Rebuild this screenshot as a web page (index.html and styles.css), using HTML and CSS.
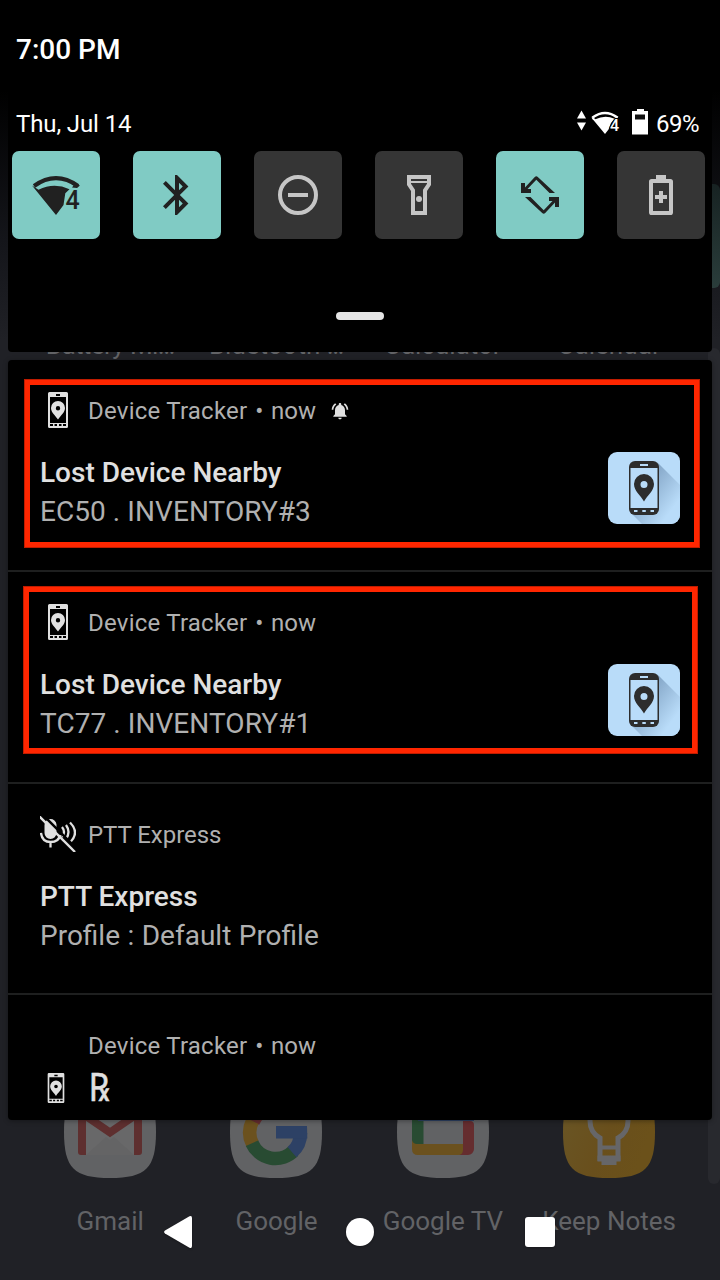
FILE: index.html
```html
<!DOCTYPE html>
<html lang="en">
<head>
<meta charset="utf-8">
<title>Notification shade</title>
<link rel="stylesheet" href="styles.css">
</head>
<body>
<svg class="defs" width="0" height="0" aria-hidden="true">
  <defs>
    <linearGradient id="cast" x1="0.35" y1="0.3" x2="0.85" y2="0.75">
      <stop offset="0" stop-color="#86a8c9"/><stop offset="1" stop-color="#b9dcf9"/>
    </linearGradient>
    <linearGradient id="keep" x1="0" y1="0" x2="1" y2="0.4">
      <stop offset="0" stop-color="#695626"/><stop offset="0.6" stop-color="#694f1c"/><stop offset="1" stop-color="#6b511a"/>
    </linearGradient>
    <symbol id="tracker" viewBox="0 0 36 36">
      <path fill="#e0e0e0" fill-rule="evenodd" d="M9.500 0h17a1.500 1.500 0 0 1 1.500 1.500v33a1.500 1.500 0 0 1-1.500 1.500h-17a1.500 1.500 0 0 1-1.500-1.500v-33A1.500 1.500 0 0 1 9.500 0zM10 5v26h16V5zM16 2v2h4V2zM10 32v2h3v-2zM14.500 32v2h2.500v-2zM19 32v2h2.500v-2zM23 32v2h3v-2z"/>
      <path fill="#e0e0e0" fill-rule="evenodd" d="M18 9a7 7 0 0 0-7 7c0 4.500 4 7 7 11.500 3-4.500 7-7 7-11.500a7 7 0 0 0-7-7zm0 5a2.200 2.200 0 1 1 0 4.400 2.200 2.200 0 0 1 0-4.400z"/>
    </symbol>
    <symbol id="tracker-tile" viewBox="0 0 72 72">
      <path fill="#b9dcf9" d="M0 0h72v72H0z"/>
      <path fill="url(#cast)" d="M50 11L72 33v39H34L22 60z"/>
      <path fill="#2d2d2d" fill-rule="evenodd" d="M27 9h18a6 6 0 0 1 6 6v42a6 6 0 0 1-6 6H27a6 6 0 0 1-6-6V15a6 6 0 0 1 6-6z"/>
      <path fill="#b9dcf9" d="M22.500 16h27v40h-27zM32 12h8v2h-8zM26 58h3.500v2H26zM34.300 58h3.500v2h-3.500zM42.500 58H46v2h-3.500z"/>
      <path fill="#2d2d2d" fill-rule="evenodd" d="M36 22a10 10 0 0 0-10 10c0 7 6.500 11 10 17.500C39.500 43 46 39 46 32a10 10 0 0 0-10-10zm0 7a3.500 3.500 0 1 1 0 7 3.500 3.500 0 0 1 0-7z"/>
    </symbol>
  </defs>
</svg>
<main class="screen">
  <section class="home">
    <div class="peek-names"><span class="tight">Battery Mi…</span><span>Bluetooth …</span><span>Calculator</span><span>Calendar</span></div>
    <div class="apps">
      <div class="app">
        <svg width="92" height="92" viewBox="0 0 92 92"><path fill="#616264" d="M46 0C10 0 0 10 0 46s10 46 46 46 46-10 46-46S82 0 46 0z"/><path fill="#686869" d="M22 30h48v39H22z"/><path fill="#646465" d="M22 69l20-18 4 3 4-3 20 18z"/><path fill="#5e2f2f" d="M14 26h8v43h-5a3 3 0 0 1-3-3zM70 26h8v40a3 3 0 0 1-3 3h-5z"/><path fill="none" stroke="#5e2f2f" stroke-width="8" d="M16 26l30 20.500L76 26"/></svg>
        <span>Gmail</span>
      </div>
      <div class="app">
        <svg width="92" height="92" viewBox="0 0 92 92"><path fill="#616264" d="M46 0C10 0 0 10 0 46s10 46 46 46 46-10 46-46S82 0 46 0z"/><g fill="none" stroke-width="13.500"><path stroke="#652d2f" d="M64 28a25.500 25.500 0 0 0-41 8"/><path stroke="#6b511e" d="M22.500 35a25.500 25.500 0 0 0 0 23"/><path stroke="#284b32" d="M22 57.200a25.500 25.500 0 0 0 41.500 7.800"/><path stroke="#2d4165" d="M62 66.200C67.500 61.500 70.500 55 70.500 47"/></g><path fill="#2d4165" d="M46 40h31l.3 12.500H46z"/></svg>
        <span>Google</span>
      </div>
      <div class="app">
        <svg width="92" height="92" viewBox="0 0 92 92"><path fill="#616264" d="M46 0C10 0 0 10 0 46s10 46 46 46 46-10 46-46S82 0 46 0z"/><path fill="#284b32" d="M15 23h11.500v36H15z"/><path fill="#2d4165" d="M21 23h56v12H21z"/><path fill="#652d2f" d="M66 35h7a4 4 0 0 1 4 4v24a6 6 0 0 1-6 6h-9l4-6z"/><path fill="#6b511e" d="M15 54q1 4 5 4h46v6q0 5-5 5H21q-6 0-6-6z"/></svg>
        <span>Google TV</span>
      </div>
      <div class="app">
        <svg width="92" height="92" viewBox="0 0 92 92"><path fill="url(#keep)" d="M46 0C10 0 0 10 0 46s10 46 46 46 46-10 46-46S82 0 46 0z"/><g fill="none" stroke="#666668" stroke-width="5"><path d="M37 73V52q-10-5.500-10-17a19 19 0 0 1 38 0q0 11.500-10 17v21z"/><path stroke-width="4" d="M37 61.500h18"/></g><path fill="#666668" d="M34.500 69.500h23v5.500h-4v4h-15v-4h-4z"/></svg>
        <span>Keep Notes</span>
      </div>
    </div>
  </section>
  <i class="widget-edge"></i>
  <i class="drawer-edge"></i>

  <div class="shade">
    <section class="quick">
      <div class="clock">7:00 PM</div>
      <div class="status">
        <span class="date">Thu, Jul 14</span>
        <span class="indicators">
          <svg width="80" height="28" viewBox="0 0 80 28" fill="#fff"><path d="M5.500 1.500l4.500 8H1zM1 13.500h9L5.500 21.500z"/><path fill="none" stroke="#fff" stroke-width="2.300" d="M16.500 8.500Q29-.5 41.500 8.500"/><path d="M15.300 8.500l4 1.800Q29 5.500 38.500 9.700L35 14l-2.500 6.500-3.500 4.600z"/><path d="M15.500 7.500l1.500 3.500L20 10.500zM42.500 7.500l-2 2.500-3-.8z"/><path d="M61 0h7v2h4v23.500H56V2h5z"/><path fill="#111" d="M59 5.500h10v5H59z"/><text class="wifi-small" x="34" y="22">4</text></svg>
          <span class="percent">69%</span>
        </span>
      </div>
      <div class="tiles">
        <div class="tile on"><svg width="60" height="48" viewBox="0 0 60 48"><path fill="none" stroke="#212121" stroke-width="4" d="M8 15Q30-.7 52 15"/><path fill="#212121" d="M6 14.500l6.500 4.200Q28 11 43.500 18.200l-4.200 4L37.500 34 30 44z"/><path fill="#212121" d="M54 14.500L51 17l-5-.5 3-4z"/><text class="wifi-large" x="39.500" y="37.500">4</text></svg></div>
        <div class="tile on"><svg width="48" height="48" viewBox="0 0 24 24" fill="#212121"><path d="M17.710 7.710L12 2h-1v7.590L6.410 5 5 6.410 10.590 12 5 17.590 6.410 19 11 14.410V22h1l5.710-5.710-4.300-4.290 4.300-4.290zM13 5.830l1.880 1.880L13 9.590V5.830zm1.880 10.460L13 18.170v-3.760l1.880 1.880z"/></svg></div>
        <div class="tile"><svg width="48" height="48" viewBox="0 0 24 24" fill="none" stroke="#c6c6c6" stroke-width="2"><circle cx="12" cy="12" r="9"/><path d="M7 12h10"/></svg></div>
        <div class="tile"><svg width="48" height="48" viewBox="0 0 24 24" fill="none" stroke="#c6c6c6" stroke-width="2"><path d="M7 3h10v3.700l-2 3V21H9V9.700l-2-3z"/><path stroke-width="1" d="M7 5.500h10"/><circle cx="12" cy="14" r="1.500" fill="#c6c6c6" stroke="none"/></svg></div>
        <div class="tile on"><svg width="48" height="48" viewBox="0 0 48 48" fill="#212121"><path id="turn" d="M5 12h4v4.400L18.800 6q1.500-1.500 3 0L39 22h-5.500L20.300 8.800 11.500 18H15v4H5z"/><use href="#turn" transform="rotate(180 24 24)"/></svg></div>
        <div class="tile"><svg width="48" height="48" viewBox="0 0 24 24"><path fill="#c6c6c6" fill-rule="evenodd" d="M9.500 2h5v2h2.200c.8 0 1.300.5 1.300 1.300v15.400c0 .8-.5 1.300-1.300 1.300H7.300C6.500 22 6 21.500 6 20.700V5.300C6 4.500 6.500 4 7.300 4h2.200zM8 6v14h8V6zm3 4h2v2h2v2h-2v2h-2v-2H9v-2h2z"/></svg></div>
      </div>
      <div class="handle"></div>
    </section>

    <section class="notifications">
      <article class="note">
        <header><svg width="36" height="36"><use href="#tracker"/></svg><div class="source"><span class="name">Device Tracker</span><span>•</span><span>now</span></div>
          <svg class="bell" width="20" height="20" viewBox="0 0 24 24" fill="#e0e0e0"><path d="M7.580 4.080L6.150 2.650C3.750 4.480 2.170 7.300 2.030 10.500h2c.15-2.650 1.510-4.970 3.550-6.420zm12.390 6.420h2c-.15-3.200-1.730-6.020-4.120-7.850l-1.420 1.430c2.020 1.450 3.390 3.770 3.540 6.420zM18 11c0-3.070-1.640-5.640-4.500-6.320V4c0-.83-.67-1.500-1.500-1.500s-1.500.67-1.500 1.500v.68C7.630 5.360 6 7.920 6 11v5l-2 2v1h16v-1l-2-2v-5zm-6 11c1.100 0 2-.9 2-2h-4c0 1.100.9 2 2 2z"/></svg>
        </header>
        <div class="content"><div><h2>Lost Device Nearby</h2><p class="asset">EC50 . INVENTORY#3</p></div><svg class="avatar" width="72" height="72"><use href="#tracker-tile"/></svg></div>
        <i class="highlight first"></i>
      </article>
      <article class="note">
        <header><svg width="36" height="36"><use href="#tracker"/></svg><div class="source"><span class="name">Device Tracker</span><span>•</span><span>now</span></div></header>
        <div class="content"><div><h2>Lost Device Nearby</h2><p class="asset">TC77 . INVENTORY#1</p></div><svg class="avatar" width="72" height="72"><use href="#tracker-tile"/></svg></div>
        <i class="highlight second"></i>
      </article>
      <article class="note ptt">
        <header><svg width="36" height="36" viewBox="0 0 36 36"><g fill="none" stroke="#e0e0e0" stroke-width="2.300"><path d="M1 17q1 9 9.500 9T20 19M10.500 26v5.500"/><path d="M22 11q4 5 0 10M26 9q5 7 0 14M30 6.500q10 10 0 20"/></g><path fill="#e0e0e0" d="M4.500 9.500a6 6 0 0 1 12-1V17a6 6 0 0 1-12 0z"/><path stroke="#000" stroke-width="2.500" d="M2-2l36 36"/><path stroke="#e0e0e0" stroke-width="2.400" d="M-1 0l36 36"/></svg><div class="source"><span>PTT Express</span></div></header>
        <div class="content"><div><h2>PTT Express</h2><p class="profile">Profile : Default Profile</p></div></div>
      </article>
      <article class="note compact">
        <header><div class="source"><span class="name">Device Tracker</span><span>•</span><span>now</span></div></header>
        <div class="mini"><svg width="30" height="30"><use href="#tracker"/></svg><svg class="rx" width="24" height="30" viewBox="0 0 24 30"><text transform="scale(1 1.280)" x="-0.500" y="21.500" textLength="21" lengthAdjust="spacingAndGlyphs">℞</text></svg></div>
      </article>
    </section>
  </div>

  <nav class="system-nav">
    <svg width="28" height="32" viewBox="0 0 28 32"><path fill="#fff" d="M25.500.3Q28-.7 28 2v28q0 2.700-2.500 1.700L1 17.500Q-.8 16 1 14.500z"/></svg>
    <i class="circle"></i>
    <i class="square"></i>
  </nav>
</main>
</body>
</html>
```
FILE: styles.css
```css
* { box-sizing: border-box; }
body { margin: 0; background: #000; font-family: Roboto, "Liberation Sans", sans-serif; }
svg { display: block; flex: none; }
h2, p { margin: 0; }
.defs { position: absolute; }
.screen {
  position: relative; width: 720px; height: 1280px; overflow: hidden;
  background: linear-gradient(#000 0, #000 90px, #14151a 240px, #202126 340px, #202126 100%);
}

.home { position: absolute; inset: 0; padding: 331px 27px 0; color: #626366; font-size: 26px; }
.peek-names { display: grid; grid-template-columns: repeat(4, 166.330px); height: 28px; line-height: 28px; text-align: center; white-space: nowrap; }
.tight { letter-spacing: -.6px; }
.apps { display: grid; grid-template-columns: repeat(4, 166.330px); margin-top: 727px; }
.app { display: flex; flex-direction: column; align-items: center; gap: 28px; line-height: 30px; white-space: nowrap; }
.widget-edge { position: absolute; right: 0; top: 184px; width: 12px; height: 104px; border-radius: 0 6px 6px 0; background: linear-gradient(#172222, #2a3d3b); }
.drawer-edge { position: absolute; right: 0; top: 348px; width: 12px; height: 836px; border-radius: 6px; background: #28292e; }

.shade { position: relative; display: flex; flex-direction: column; gap: 8px; padding: 0 8px; }
.quick { display: flex; flex-direction: column; height: 352px; padding-top: 34px; background: #000; border-radius: 0 0 4px 4px; color: #fff; }
.clock { padding-left: 8px; font-size: 28px; font-weight: 500; line-height: 32px; }
.status { display: flex; justify-content: space-between; margin-top: 42px; padding: 0 13px 0 8px; font-size: 24px; line-height: 32px; }
.date { letter-spacing: -.12px; }
.indicators { display: flex; align-items: center; }
.indicators svg { margin-bottom: 2px; }
.percent { letter-spacing: -.5px; }
.wifi-small { font-size: 16px; font-weight: 500; stroke: #000; stroke-width: 2px; paint-order: stroke; }
.wifi-large { font-size: 25px; font-weight: 500; fill: #212121; stroke: #80cbc4; stroke-width: 3px; paint-order: stroke; }
.tiles { display: flex; gap: 33px; margin-top: 11px; padding-left: 4px; }
.tile { display: flex; align-items: center; justify-content: center; width: 88px; height: 88px; flex: none; border-radius: 7px; background: #353535; }
.tile.on { background: #80cbc4; }
.handle { width: 48px; height: 8px; margin: 73px auto 0; border-radius: 4px; background: #e5e5e5; }

.notifications { height: 760px; overflow: hidden; border-radius: 4px; background: #000; box-shadow: 0 1px 5px rgba(0, 0, 0, .35); }
.note { position: relative; height: 212px; padding: 32px 32px 0; border-bottom: 2px solid #1e1f1f; }
.note header { display: flex; align-items: center; gap: 12px; height: 36px; color: #b0b0b0; font-size: 24px; line-height: 36px; }
.source { display: flex; gap: 7.800px; padding-top: 2px; letter-spacing: -.05px; }
.name { letter-spacing: .24px; }
.content { display: flex; justify-content: space-between; margin-top: 24px; font-size: 28px; line-height: 39px; }
.content h2 { color: #e0e0e0; font-size: 28px; font-weight: 500; line-height: 39px; padding-top: 1px; }
.content p { color: #b0b0b0; }
.content .asset { letter-spacing: .06px; }
.content .profile { word-spacing: .5px; }
.avatar { border-radius: 9px; }
.bell { margin: 2px 0 0 2px; }
.highlight { position: absolute; border: 6px solid #ff2600; outline: 1px solid rgba(0, 0, 0, .25); outline-offset: -1px; }
.first { left: 16px; top: 19px; width: 676px; height: 169px; }
.second { left: 15px; top: 14px; width: 675px; height: 168px; }
.note.ptt { height: 211px; }
.note.compact { height: 125px; border: 0; }
.compact header { padding-left: 48px; }
.mini { display: flex; align-items: center; gap: 18px; padding: 10px 0 0 1px; }
.rx { overflow: visible; font-family: "Noto Sans", "DejaVu Sans", sans-serif; font-size: 31px; fill: #e0e0e0; stroke: #e0e0e0; stroke-width: .4px; }

.system-nav { position: absolute; left: 164px; top: 1216px; display: flex; align-items: center; filter: drop-shadow(0 1px 1px rgba(0, 0, 0, .3)); }
.circle { width: 28px; height: 28px; margin: 0 151px 0 154px; border-radius: 50%; background: #fff; }
.square { width: 30px; height: 30px; border-radius: 3px; background: #fff; }
```
